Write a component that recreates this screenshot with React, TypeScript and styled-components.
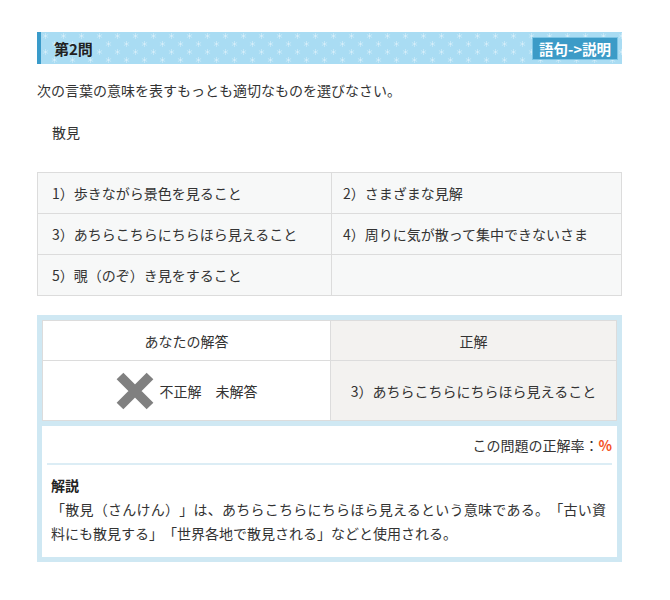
import React from "react";
import styled, { createGlobalStyle } from "styled-components";

/* header snow pattern */
const snow = `<svg xmlns="http://www.w3.org/2000/svg" width="18" height="16" viewBox="0 0 18 16">
<g stroke="#ffffff" stroke-opacity="0.4" stroke-width="0.8" fill="none">
<path d="M4.5 1v6M1.9 2.5l5.2 3M1.9 5.5l5.2-3"/>
<path d="M13.5 9v6M10.9 10.5l5.2 3M10.9 13.5l5.2-3"/>
</g></svg>`;
const snowUrl = `url("data:image/svg+xml,${encodeURIComponent(snow)}")`;

const GlobalStyle = createGlobalStyle`
  body {
    margin: 0;
    background: #ffffff;
    color: #333333;
    font-family: "Noto Sans CJK JP", "Noto Sans", sans-serif;
    font-size: 14px;
    text-spacing-trim: space-all;
  }
`;

const Page = styled.div`
  width: 585px;
  padding: 32px 0 40px 37px;
`;

const QuestionHeader = styled.div`
  display: flex;
  align-items: center;
  justify-content: space-between;
  height: 32px;
  padding: 0 4px 0 13px;
  border-left: 4px solid #3a9bca;
  background-color: #a9dcf3;
  background-image: ${snowUrl};
`;

const QuestionTitle = styled.h2`
  margin: 0;
  font-size: 15px;
  font-weight: bold;
  color: #222222;
`;

const ModeBadge = styled.span`
  height: 21px;
  line-height: 21px;
  padding: 0 6px;
  border: 1px solid #7cc4e4;
  background: #3c9bc7;
  color: #ffffff;
  font-size: 14.5px;
  font-weight: bold;
`;

const Instruction = styled.p`
  margin: 14px 0 0;
  line-height: 24px;
`;

const Word = styled.p`
  margin: 18px 0 0;
  padding-left: 15px;
  line-height: 24px;
`;

const OptionGrid = styled.div`
  display: grid;
  grid-template-columns: 294px 1fr;
  margin-top: 28px;
  border-top: 1px solid #dcdcdc;
  border-left: 1px solid #dcdcdc;
  background: #f7f8f8;
`;

const OptionCell = styled.div<{ $right?: boolean }>`
  display: flex;
  align-items: center;
  height: 40px;
  padding-left: ${(p) => (p.$right ? "11px" : "14px")};
  border-right: 1px solid #dcdcdc;
  border-bottom: 1px solid #dcdcdc;
`;

const AnswerBox = styled.div`
  margin-top: 19px;
  padding: 5px;
  background: #cfe8f3;
`;

const AnswerGrid = styled.div`
  display: grid;
  grid-template-columns: 288px 1fr;
  border-top: 1px solid #dcdcdc;
  border-left: 1px solid #dcdcdc;
`;

const AnswerCell = styled.div<{ $correct?: boolean; $tall?: boolean }>`
  display: flex;
  align-items: center;
  justify-content: center;
  gap: 6px;
  height: ${(p) => (p.$tall ? "59px" : "39px")};
  border-right: 1px solid #dcdcdc;
  border-bottom: 1px solid #dcdcdc;
  background: ${(p) => (p.$correct ? "#f3f2f0" : "#ffffff")};
`;

const CrossMark = styled.svg`
  width: 38px;
  height: 38px;
  flex: none;
`;

const ResultPanel = styled.div`
  margin-top: 5px;
  padding: 7px 5px 12px;
  background: #ffffff;
`;

const RateRow = styled.div`
  text-align: right;
  line-height: 24px;
  padding-bottom: 6px;
  border-bottom: 2px solid #dcedf5;
`;

const Percent = styled.span`
  color: #f4511e;
  font-weight: bold;
`;

const CommentTitle = styled.h3`
  margin: 8px 0 0;
  padding-left: 4px;
  font-size: 14px;
  font-weight: bold;
  line-height: 24px;
  color: #222222;
`;

const CommentText = styled.p`
  margin: 0;
  width: 555px;
  padding-left: 4px;
  line-height: 24px;
  text-align: justify;
`;

const options = [
  "1）歩きながら景色を見ること",
  "2）さまざまな見解",
  "3）あちらこちらにちらほら見えること",
  "4）周りに気が散って集中できないさま",
  "5）覗（のぞ）き見をすること",
  "",
];

export default function App() {
  return (
    <>
      <GlobalStyle />
      <Page>
        <QuestionHeader>
          <QuestionTitle>第2問</QuestionTitle>
          <ModeBadge>語句-&gt;説明</ModeBadge>
        </QuestionHeader>
        <Instruction>次の言葉の意味を表すもっとも適切なものを選びなさい。</Instruction>
        <Word>散見</Word>

        <OptionGrid>
          {options.map((o, i) => (
            <OptionCell key={i} $right={i % 2 === 1}>
              {o}
            </OptionCell>
          ))}
        </OptionGrid>

        <AnswerBox>
          <AnswerGrid>
            <AnswerCell>あなたの解答</AnswerCell>
            <AnswerCell $correct>正解</AnswerCell>
            <AnswerCell $tall>
              <CrossMark viewBox="0 0 38 38">
                <path d="M4 4L34 34M34 4L4 34" stroke="#808080" strokeWidth="9.5" />
              </CrossMark>
              <span>不正解　未解答</span>
            </AnswerCell>
            <AnswerCell $tall $correct>
              3）あちらこちらにちらほら見えること
            </AnswerCell>
          </AnswerGrid>
          <ResultPanel>
            <RateRow>
              この問題の正解率：<Percent>%</Percent>
            </RateRow>
            <CommentTitle>解説</CommentTitle>
            <CommentText>
              「散見（さんけん）」は、あちらこちらにちらほら見えるという意味である。「古い資料にも散見する」「世界各地で散見される」などと使用される。
            </CommentText>
          </ResultPanel>
        </AnswerBox>
      </Page>
    </>
  );
}
